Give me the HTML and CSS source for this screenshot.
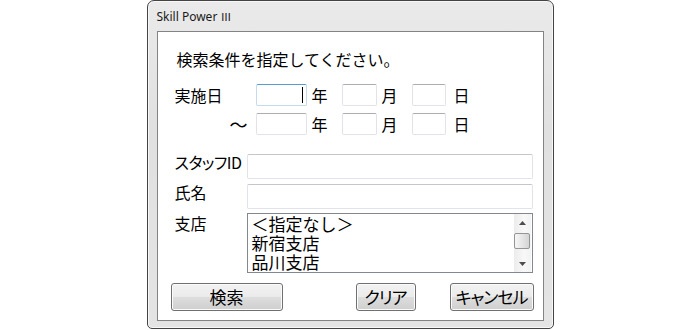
FILE: index.html
```html
<!DOCTYPE html>
<html lang="ja">
<head>
  <meta charset="UTF-8">
  <title>Skill Power Ⅲ</title>
  <link rel="stylesheet" href="styles.css">
</head>
<body>
  <div class="window">
    <div class="titlebar">Skill Power <span class="numeral">Ⅲ</span></div>

    <div class="client">
      <p class="lead">検索条件を指定してください。</p>

      <!-- 実施日 (from) -->
      <div class="date-row">
        <span class="date-label">実施日</span>
        <span class="box box-year focused"><span class="caret"></span></span>
        <span class="unit">年</span>
        <span class="box box-month"></span>
        <span class="unit">月</span>
        <span class="box box-day"></span>
        <span class="unit unit-last">日</span>
      </div>

      <!-- 実施日 (to) -->
      <div class="date-row row-gap">
        <span class="date-label range">〜</span>
        <span class="box box-year"></span>
        <span class="unit">年</span>
        <span class="box box-month"></span>
        <span class="unit">月</span>
        <span class="box box-day"></span>
        <span class="unit unit-last">日</span>
      </div>

      <div class="field-row first-field">
        <span class="field-label kana">スタッフID</span>
        <span class="textbox"></span>
      </div>

      <div class="field-row name-field">
        <span class="field-label">氏名</span>
        <span class="textbox"></span>
      </div>

      <div class="field-row list-field">
        <span class="field-label list-label">支店</span>
        <div class="listbox">
          <ul class="items">
            <li>＜指定なし＞</li>
            <li>新宿支店</li>
            <li>品川支店</li>
          </ul>
          <div class="scrollbar">
            <div class="arrow">
              <svg width="7" height="4" viewBox="0 0 7 4"><polygon points="0,4 3.5,0 7,4" fill="#4d4d4d"/></svg>
            </div>
            <div class="track"><div class="thumb"></div></div>
            <div class="arrow">
              <svg width="7" height="4" viewBox="0 0 7 4"><polygon points="0,0 7,0 3.5,4" fill="#4d4d4d"/></svg>
            </div>
          </div>
        </div>
      </div>

      <div class="buttons">
        <button class="btn btn-search">検索</button>
        <button class="btn btn-clear">クリア</button>
        <button class="btn btn-cancel">キャンセル</button>
      </div>
    </div>
  </div>
</body>
</html>
```

FILE: styles.css
```css
html, body {
  margin: 0;
  padding: 0;
  background-color: #ffffff;
}

body {
  display: flex;
  justify-content: center;
  font-family: "Noto Sans CJK JP", sans-serif;
  color: #000;
}

/* window frame */
.window {
  width: 387px;
  height: 320px;
  border: 1px solid #444444;
  border-radius: 7px 7px 5px 5px;
  background: linear-gradient(to bottom, #eaeaea, #e0e0e0 40%, #e4e4e4);
  box-shadow: inset 0 0 0 1px #f7f7f7;
  padding: 0 9px 7px 9px;
  display: flex;
  flex-direction: column;
}

.titlebar {
  height: 30px;
  line-height: 16px;
  padding-top: 7px;
  box-sizing: border-box;
  font-family: "Noto Sans", "Noto Sans CJK JP", sans-serif;
  font-size: 12px;
  color: #1a1a1a;
}

.numeral {
  font-family: "Noto Sans CJK JP", sans-serif;
  font-size: 11px;
}

.client {
  height: 290px;
  box-sizing: border-box;
  border: 1px solid #838383;
  background-color: #ffffff;
  padding: 16px 10px 0 17px;
  display: flex;
  flex-direction: column;
}

.lead {
  margin: 0 0 14px 2px;
  font-size: 16px;
  line-height: 22px;
}

/* date rows */
.date-row {
  display: flex;
  align-items: center;
  height: 22px;
  font-size: 16px;
}

.row-gap {
  margin-top: 7px;
}

.date-label {
  width: 81px;
  line-height: 16px;
}

.date-label.range {
  text-align: right;
  padding-right: 8px;
  box-sizing: border-box;
  font-size: 18px;
}

.box {
  height: 22px;
  box-sizing: border-box;
  border: 1px solid #e2e3ea;
  border-top-color: #abadb3;
  border-radius: 2px;
  display: flex;
  justify-content: flex-end;
  align-items: center;
}

.box-year { width: 51px; }
.box-month { width: 35px; }
.box-day { width: 34px; }

.box.focused {
  border-color: #c5daed;
  border-top-color: #5b9bd1;
}

.caret {
  width: 1px;
  height: 16px;
  background-color: #000;
  margin-right: 3px;
}

.unit {
  width: 16px;
  margin: 0 14px 0 5px;
  line-height: 16px;
}

.unit-last {
  margin: 0 0 0 8px;
}

/* text fields */
.field-row {
  display: flex;
  align-items: flex-start;
  font-size: 16px;
}

.first-field { margin-top: 19px; }
.name-field { margin-top: 5px; }
.list-field { margin-top: 4px; }

.field-label {
  width: 72px;
  flex-shrink: 0;
  line-height: 16px;
}

.field-label.kana {
  font-feature-settings: "palt";
  letter-spacing: -0.5px;
}

.list-label {
  margin-top: 2px;
}

.textbox {
  flex: 1;
  height: 25px;
  box-sizing: border-box;
  border: 1px solid #e2e3ea;
  border-top-color: #c4c6cc;
  border-radius: 2px;
}

/* list box */
.listbox {
  flex: 1;
  height: 60px;
  box-sizing: border-box;
  border: 1px solid #828790;
  display: flex;
}

.items {
  flex: 1;
  margin: 0;
  padding: 0 0 0 4px;
  list-style: none;
  font-size: 17px;
  line-height: 19px;
  overflow: hidden;
}

.scrollbar {
  width: 17px;
  margin-right: 1px;
  display: flex;
  flex-direction: column;
  background: linear-gradient(to right, #ececec, #f8f8f8 60%, #f2f2f2);
}

.arrow {
  height: 17px;
  display: flex;
  justify-content: center;
  align-items: center;
}

.track {
  flex: 1;
  padding-top: 2px;
}

.thumb {
  height: 16px;
  margin: 0 1px 0 0;
  box-sizing: border-box;
  border: 1px solid #959595;
  border-radius: 2px;
  background: linear-gradient(to right, #f6f6f6, #e6e6e6 50%, #d4d4d4);
}

/* buttons */
.buttons {
  display: flex;
  margin: 10px -1px 0 -4px;
}

.btn {
  height: 28px;
  padding: 0;
  border: 1px solid #707070;
  border-radius: 3px;
  background: linear-gradient(to bottom, #f2f2f2 0%, #ebebeb 48%, #dddddd 52%, #cfcfcf 100%);
  box-shadow: inset 0 0 0 1px #fbfbfb;
  font-family: "Noto Sans CJK JP", sans-serif;
  font-size: 17px;
  line-height: 20px;
  color: #000;
  cursor: pointer;
  font-feature-settings: "palt";
}

.btn-search { width: 112px; }

.btn-clear {
  width: 60px;
  margin-left: auto;
  letter-spacing: -1px;
}

.btn-cancel {
  width: 84px;
  margin-left: 34px;
  letter-spacing: -1px;
}
```
